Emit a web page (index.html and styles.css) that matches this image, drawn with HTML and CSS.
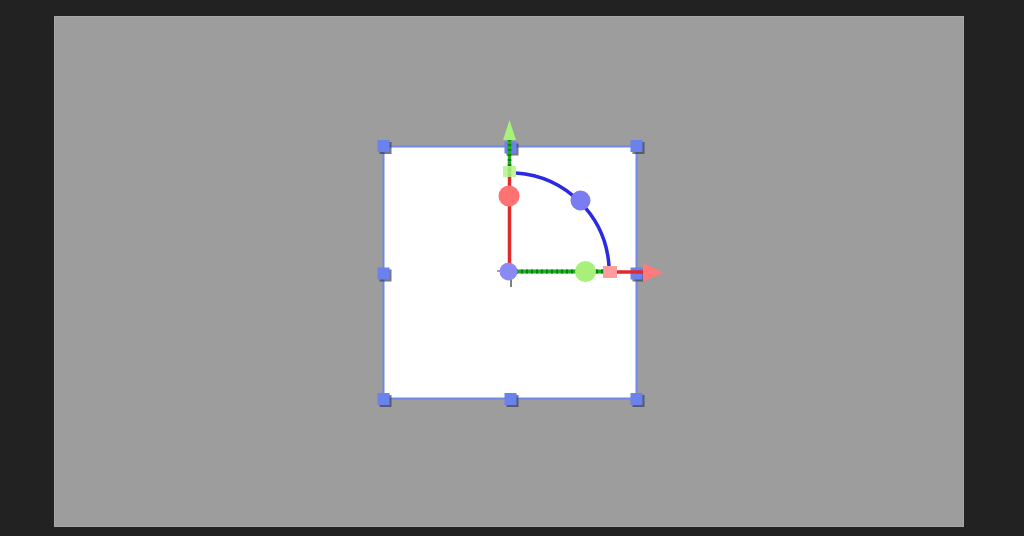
FILE: index.html
```html
<!DOCTYPE html>
<html>
<head>
<meta charset="utf-8">
<link rel="stylesheet" href="styles.css">
</head>
<body>
<div class="editor">
  <div class="canvas">
    <svg class="scene" viewBox="54 16 910 511" width="910" height="511">
      <rect x="383.5" y="146.5" width="253" height="252" fill="#ffffff" stroke="#7189e6" stroke-width="2"/>
      <g class="handles">
        <rect x="379.5" y="142" width="12" height="12" fill="#3a3f55" opacity="0.7"/>
        <rect x="377.5" y="140" width="12" height="12" fill="#6a82ec"/>
        <rect x="506.5" y="143.5" width="12" height="12" fill="#3a3f55" opacity="0.7"/>
        <rect x="504.5" y="141.5" width="12" height="12" fill="#6a82ec"/>
        <rect x="632.5" y="142" width="12" height="12" fill="#3a3f55" opacity="0.7"/>
        <rect x="630.5" y="140" width="12" height="12" fill="#6a82ec"/>
        <rect x="379.5" y="269.5" width="12" height="12" fill="#3a3f55" opacity="0.7"/>
        <rect x="377.5" y="267.5" width="12" height="12" fill="#6a82ec"/>
        <rect x="632.5" y="269.5" width="12" height="12" fill="#3a3f55" opacity="0.7"/>
        <rect x="630.5" y="267.5" width="12" height="12" fill="#6a82ec"/>
        <rect x="379.5" y="395" width="12" height="12" fill="#3a3f55" opacity="0.7"/>
        <rect x="377.5" y="393" width="12" height="12" fill="#6a82ec"/>
        <rect x="506.5" y="395" width="12" height="12" fill="#3a3f55" opacity="0.7"/>
        <rect x="504.5" y="393" width="12" height="12" fill="#6a82ec"/>
        <rect x="632.5" y="395" width="12" height="12" fill="#3a3f55" opacity="0.7"/>
        <rect x="630.5" y="393" width="12" height="12" fill="#6a82ec"/>
      </g>
      <g class="gizmo">
        <path d="M516 173 A100 100 0 0 1 609 266" fill="none" stroke="#2a2ae0" stroke-width="3.5"/>
        <line x1="509.5" y1="272" x2="509.5" y2="176" stroke="#e22a2a" stroke-width="3.5"/>
        <line x1="509.5" y1="176" x2="509.5" y2="138" stroke="#1fae1f" stroke-width="3.5"/>
        <line x1="509.5" y1="176" x2="509.5" y2="138" stroke="#138013" stroke-width="3.5" stroke-dasharray="2 3"/>
        <polygon points="509.5,120 503,140 516,140" fill="#a6f27a"/>
        <rect x="503" y="166" width="13" height="11" fill="#b4f28a" opacity="0.85"/>
        <line x1="516" y1="271.5" x2="604" y2="271.5" stroke="#1fae1f" stroke-width="4"/>
        <line x1="516" y1="271.5" x2="604" y2="271.5" stroke="#138013" stroke-width="4" stroke-dasharray="2 3"/>
        <line x1="617" y1="272" x2="644" y2="272" stroke="#e22a2a" stroke-width="3.5"/>
        <polygon points="643,263 663,272.5 643,282" fill="#ff7a7a"/>
        <rect x="603" y="266" width="14" height="12" fill="#ff8c8c" opacity="0.85"/>
        <circle cx="509" cy="196" r="10.5" fill="#ff7272"/>
        <circle cx="580.5" cy="200.5" r="10" fill="#7c7cf2"/>
        <circle cx="585.5" cy="271.5" r="10.5" fill="#a8f07a"/>
        <line x1="497" y1="271" x2="503" y2="271" stroke="#9aa0c0" stroke-width="2"/>
        <line x1="511" y1="279" x2="511" y2="287" stroke="#555" stroke-width="1.5"/>
        <circle cx="508.5" cy="271.5" r="9" fill="#8a8af5"/>
      </g>
    </svg>
  </div>
</div>
</body>
</html>
```

FILE: styles.css
```css
html, body {
  margin: 0;
  padding: 0;
  background: #222222;
  font-family: "Liberation Sans", Arial, sans-serif;
}

.editor {
  width: 1024px;
  height: 536px;
  padding: 16px 0 0 54px;
  box-sizing: border-box;
  overflow: hidden;
}

.canvas {
  width: 910px;
  height: 511px;
  background: #9d9d9d;
  box-shadow: inset 0 0 0 1px #a7a7a7;
}

.scene {
  display: block;
}
```
